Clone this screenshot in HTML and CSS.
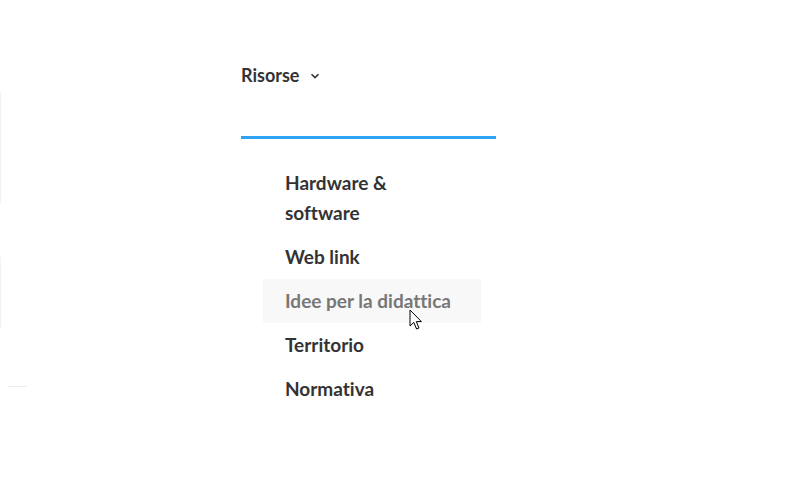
FILE: index.html
```html
<!DOCTYPE html>
<html lang="it">
<head>
    <meta charset="UTF-8">
    <meta name="viewport" content="width=device-width, initial-scale=1.0">
    <title>Risorse</title>
    <link rel="stylesheet" href="styles.css">
</head>
<body>

    <div class="page">
        <!-- bordi di elementi tagliati a sinistra -->
        <div class="side">
            <div class="side-box side-box-1"></div>
            <div class="side-box side-box-2"></div>
            <div class="side-rule"></div>
        </div>

        <nav class="menu">
            <a class="menu-top" href="#">Risorse
                <svg class="chevron" width="10" height="6" viewBox="0 0 10 6"><path d="M1.5 1.2 L5 4.6 L8.5 1.2" fill="none" stroke="#333" stroke-width="1.6"/></svg>
            </a>

            <ul class="sub-menu">
                <li><a href="#">Hardware &amp; software</a></li>
                <li><a href="#">Web link</a></li>
                <li class="hover"><a href="#">Idee per la didattica</a>
                    <svg class="cursor" width="14" height="22" viewBox="0 0 14 22"><path d="M1 1 L1 17 L4.8 13.4 L7.6 20 L10 19 L7.3 12.6 L12.4 12.6 Z" fill="#fff" stroke="#000" stroke-width="1" stroke-linejoin="miter"/></svg>
                </li>
                <li><a href="#">Territorio</a></li>
                <li><a href="#">Normativa</a></li>
            </ul>
        </nav>
    </div>

</body>
</html>
```

FILE: styles.css
```css
/* --- General --- */
body {
    margin: 0;
    background: #fff;
    font-family: Lato, "Open Sans", sans-serif;
    font-variant-ligatures: none;
    color: #333;
}

.page {
    display: flex;
    min-height: 480px;
}

/* --- Bordi a sinistra --- */
.side {
    width: 241px;
    padding-top: 92px;
    box-sizing: border-box;
}
.side-box { width: 2px; border-left: 1px solid #f2f2f2; }
.side-box-1 { height: 111px; margin-bottom: 54px; }
.side-box-2 { height: 71px; margin-bottom: 58px; }
.side-rule { width: 19px; margin-left: 8px; border-top: 1px solid #ececec; }

/* --- Menu --- */
.menu { width: 255px; }

.menu-top {
    display: flex;
    align-items: flex-start;
    gap: 11px;
    height: 136px;
    box-sizing: border-box;
    padding-top: 63px;
    line-height: 24px;
    color: #333;
    text-decoration: none;
    font-size: 18px;
    font-weight: 700;
}
.chevron { margin-top: 10px; }

.sub-menu {
    list-style: none;
    margin: 0;
    padding: 22px 15px 20px 22px;
    border-top: 3px solid #2ea3f2;
}

.sub-menu li {
    position: relative;
    padding: 7px 22px;
    width: 174px;
}
.sub-menu a {
    color: #333;
    text-decoration: none;
    font-size: 19px;
    font-weight: 700;
    line-height: 30px;
}

.sub-menu li.hover { background: #f8f8f8; }
.sub-menu li.hover a { color: #777; }

.cursor {
    position: absolute;
    left: 146px;
    top: 30px;
}
```
